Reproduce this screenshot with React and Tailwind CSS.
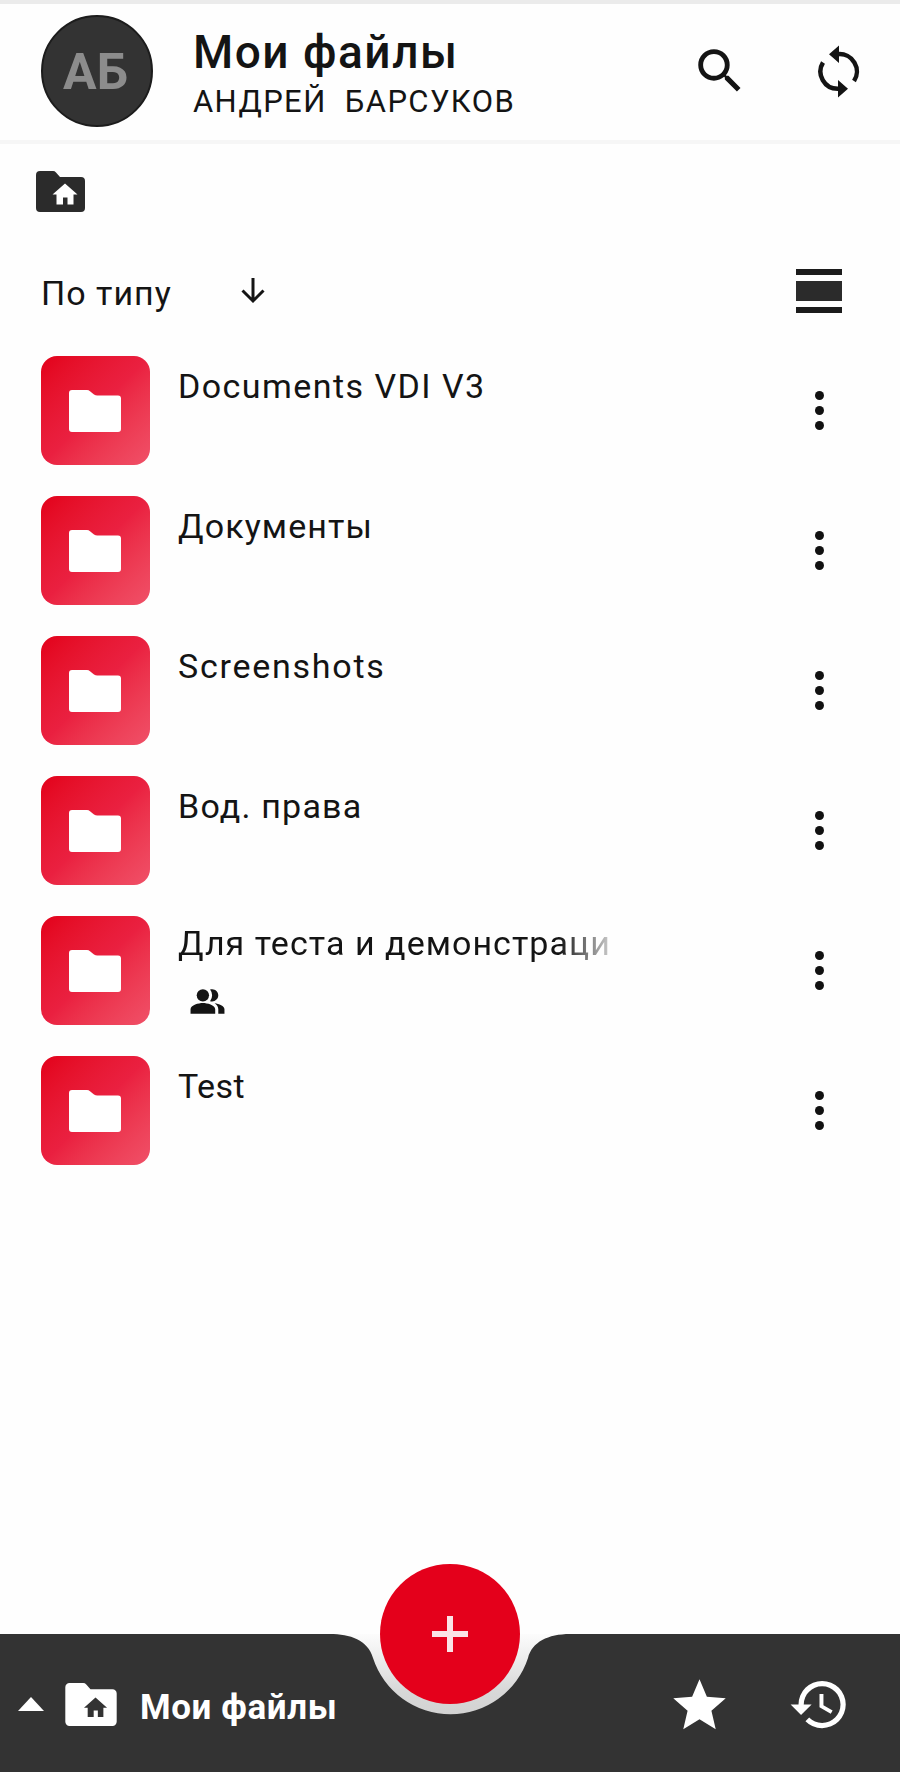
import { MdSearch, MdStar, MdPeopleAlt, MdHistory } from 'react-icons/md';

const folders = [
  { name: 'Documents VDI V3', text: 'mt-[10px] tracking-[1.45px]' },
  { name: 'Документы', text: 'mt-[10px] tracking-[1.1px]' },
  { name: 'Screenshots', text: 'mt-[10px] tracking-[1.75px]' },
  { name: 'Вод. права', text: 'mt-[10px] tracking-[1.2px]' },
  { name: 'Для теста и демонстраци', text: 'mt-[7px] tracking-[1.05px] [mask-image:linear-gradient(to_right,#000_88%,transparent_103%)]', shared: true },
  { name: 'Test', text: 'mt-[10px] tracking-[0.4px]' },
];

const HomeFolder = ({ className, houseClass, houseTransform }) => (
  <svg viewBox="0 0 49 41" className={className} fill="currentColor">
    <path d="M4 0H17a4 4 0 0 1 3 1.4L24 6H45a4 4 0 0 1 4 4V37a4 4 0 0 1-4 4H4a4 4 0 0 1-4-4V4a4 4 0 0 1 4-4Z" />
    <path className={houseClass} transform={houseTransform} d="M29 12.500 41.500 23.500H37.500V33.500H31.500V26.500H27V33.500H20.500V23.500H16.500Z" />
  </svg>
);

const FolderTile = () => (
  <div className="flex size-[109px] shrink-0 items-center justify-center rounded-[16px] bg-linear-to-br from-[#e30018] via-[#ea2040] to-[#f05068]">
    <svg viewBox="0 0 52 42" className="mr-[1px] h-[42px] w-[52px]" fill="#fff">
      <path d="M3 0H18a5 5 0 0 1 3 1.200L25 4.500a6 6 0 0 0 3.500 1H49a3 3 0 0 1 3 3V39a3 3 0 0 1-3 3H3a3 3 0 0 1-3-3V3a3 3 0 0 1 3-3Z" />
    </svg>
  </div>
);

const Kebab = () => (
  <div className="flex w-3 flex-col items-center gap-[6px]">
    <span className="size-[9px] rounded-full bg-[#111]" />
    <span className="size-[9px] rounded-full bg-[#111]" />
    <span className="size-[9px] rounded-full bg-[#111]" />
  </div>
);

const App = () => (
  <div className="flex h-[1772px] w-[900px] flex-col overflow-hidden bg-[#fefefe] font-['Roboto',sans-serif] text-[#141414]">
    <header className="flex h-[144px] shrink-0 items-start border-t-4 border-b-4 border-t-[#ebebeb] border-b-[#f6f6f6] pl-[41px]">
      <div className="mt-[11px] flex size-[112px] items-center justify-center rounded-full border-2 border-[#1c1c1c] bg-[#333] pt-[3px] pr-[3px] text-[50px] font-bold text-[#8c8c8c]">АБ</div>
      <div className="mt-[21px] ml-[40px] w-[481px]">
        <h1 className="text-[46px] leading-[54px] font-medium tracking-[1.5px]">Мои файлы</h1>
        <p className="mt-[5px] text-[31px] leading-[36px] tracking-[1.4px] whitespace-pre">АНДРЕЙ  БАРСУКОВ</p>
      </div>
      <MdSearch className="mt-[38px] ml-[17px] size-[58px]" />
      <svg viewBox="0 0 44 54" className="mt-[41px] ml-[69px] h-[54px] w-[44px]" fill="none" stroke="currentColor" strokeWidth="4.500">
        <path d="M20 9.200A17.300 17.300 0 0 1 36 36" />
        <path d="M22 43.800H20A17.300 17.300 0 0 1 5 17.500" />
        <path d="M11 9.200 21 0.500V18ZM30 43.800 20 35V52.500Z" fill="currentColor" stroke="none" />
      </svg>
    </header>

    <div className="h-[95px] shrink-0 pt-[27px] pl-[36px]">
      <HomeFolder className="h-[41px] w-[49px] text-[#2b2b2b]" houseClass="fill-white" />
    </div>

    <div className="flex h-[117px] shrink-0 items-start pl-[41px]">
      <span className="mt-[35px] w-[200px] text-[34px] leading-[38px] tracking-[1px]">По типу</span>
      <svg viewBox="0 0 24 26" className="mt-[39px] h-[26px] w-[24px]" fill="none" stroke="currentColor" strokeWidth="3">
        <path d="M12 0V23M1.500 12.500 12 23 22.500 12.500" />
      </svg>
      <div className="mt-[30px] ml-[531px] flex w-[46px] flex-col gap-[6px]">
        <div className="h-[6px] bg-[#1c1c1c]" />
        <div className="h-[20px] bg-[#2b2b2b]" />
        <div className="h-[6px] bg-[#1c1c1c]" />
      </div>
    </div>

    <main className="flex shrink-0 flex-col gap-[31px] pl-[41px]">
      {folders.map((f) => (
        <div key={f.name} className="flex h-[109px] items-center">
          <FolderTile />
          <div className="ml-[28px] flex h-full w-[433px] flex-col">
            <div className={`text-[34px] leading-[40px] whitespace-nowrap ${f.text}`}>{f.name}</div>
            {f.shared && <MdPeopleAlt className="mt-[20px] ml-[11px] size-[37px]" />}
          </div>
          <div className="ml-[202px]"><Kebab /></div>
        </div>
      ))}
    </main>

    <footer className="relative mt-auto flex h-[138px] shrink-0 items-center bg-[#333] pt-[2px] text-white">
      {/* notch around the add button */}
      <svg viewBox="0 0 240 90" className="absolute top-0 left-[330px] h-[90px] w-[240px]">
        <defs>
          <linearGradient id="notch" x1="0" y1="0" x2="0" y2="1">
            <stop offset="0" stopColor="#fcfcfc" />
            <stop offset="0.300" stopColor="#ededed" />
            <stop offset="0.700" stopColor="#d8d8d8" />
            <stop offset="1" stopColor="#d2d2d2" />
          </linearGradient>
        </defs>
        <path d="M0 0C20 0 38 6 43 24A81.500 81.500 0 0 0 198 24C202 8 218 0 240 0Z" fill="url(#notch)" />
      </svg>
      <button className="absolute top-[-70px] left-[380px] flex size-[140px] items-center justify-center rounded-full bg-[#e4001b]">
        <svg viewBox="0 0 36 36" className="size-[36px]" stroke="#fbe3e6" strokeWidth="6"><path d="M18 0V36M0 18H36" /></svg>
      </button>
      <svg viewBox="0 0 26 14" className="ml-[18px] h-[14px] w-[26px]" fill="#fff"><path d="M13 0 26 14H0Z" /></svg>
      <HomeFolder className="ml-[21px] h-[43px] w-[52px]" houseClass="fill-[#333]" houseTransform="translate(3.3 2.9) scale(0.88)" />
      <span className="mt-[8px] ml-[23px] w-[520px] text-[35px] font-bold tracking-[0.6px]">Мои файлы</span>
      <MdStar className="mt-[3px] ml-[8px] size-[63px]" />
      <MdHistory className="ml-[57px] size-[63px]" />
    </footer>
  </div>
);

export default App;
